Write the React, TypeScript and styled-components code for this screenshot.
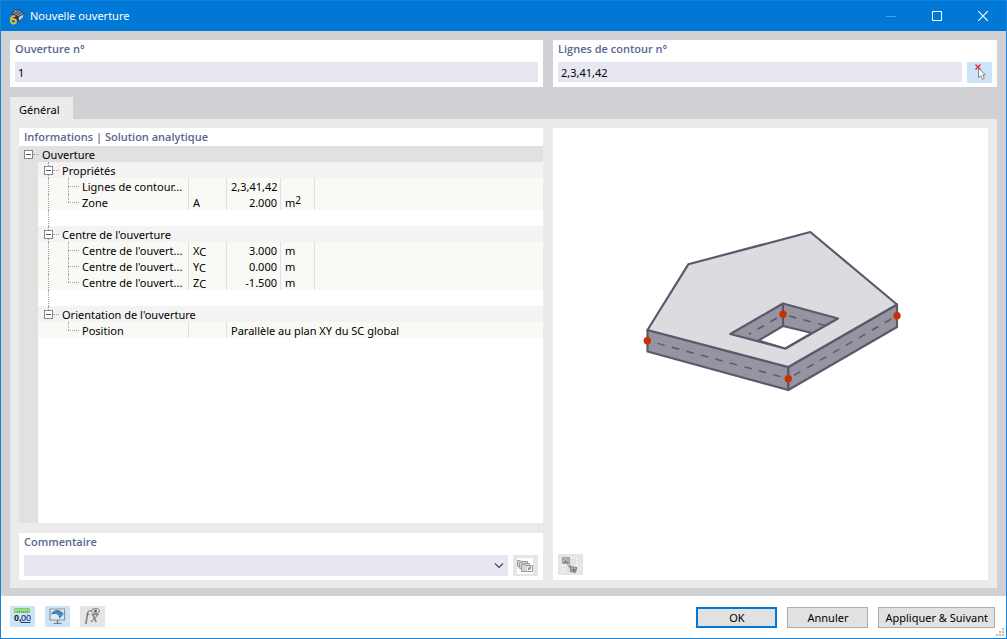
import React from "react";
import styled, { createGlobalStyle } from "styled-components";

const color = {
  accent: "#0078d7",
  frame: "#d0d0d5",
  panel: "#ebebeb",
  field: "#e7e7f2",
  heading: "#586690",
  active: "#cce4f7",
  idle: "#e5e5e5",
};

const GlobalStyle = createGlobalStyle`
  *, *::before, *::after { box-sizing: border-box; }
  body { margin: 0; }
  body, button, input, select {
    font-family: "Noto Sans", "Open Sans", sans-serif;
    font-size: 11px;
    line-height: 16px;
    color: #000;
  }
`;

const Window = styled.div`
  display: flex;
  flex-direction: column;
  min-height: 100vh;
  border: 1px solid #1883d9;
  background: #fff;
`;

const TitleBar = styled.header`
  display: flex;
  align-items: center;
  height: 30px;
  padding-left: 8px;
  background: ${color.accent};
  color: #fff;
`;

const Title = styled.h1`
  flex: 1;
  margin: 0 0 0 5px;
  font-size: 11px;
  font-weight: 400;
  line-height: 16px;
`;

const WindowButton = styled.button`
  display: grid;
  place-items: center;
  width: 46px;
  height: 30px;
  padding: 0;
  border: 0;
  background: transparent;
`;

const Body = styled.main`
  display: flex;
  flex: 1;
  flex-direction: column;
  padding: 9px 9px 8px;
  background: ${color.frame};
`;

const TopRow = styled.div`
  display: grid;
  grid-template-columns: minmax(0, 533fr) minmax(0, 444fr);
  gap: 10px;
`;

const Card = styled.section`
  display: flex;
  flex-direction: column;
  background: #fff;
  padding: 0 5px 4px;
`;

const cardHeading = `
  margin: 0;
  font-family: "Open Sans", "Noto Sans", sans-serif;
  font-size: 11px;
  font-weight: 600;
  color: ${color.heading};
`;

const FieldLabel = styled.label`
  ${cardHeading}
  padding: 1px 0 5px;
`;

const FieldRow = styled.div`
  display: flex;
  gap: 5px;
`;

const TextField = styled.input`
  flex: 1;
  min-width: 0;
  height: 20px;
  margin-bottom: 1px;
  padding: 1px 3px 0;
  border: 0;
  background: ${color.field};
`;

const IconButton = styled.button<{ $active?: boolean }>`
  display: grid;
  align-items: center;
  justify-content: start;
  flex: none;
  width: 25px;
  height: 21px;
  padding: 0 0 0 4px;
  border: 0;
  background: ${(p) => (p.$active ? color.active : color.idle)};
`;

const TabBar = styled.div`
  display: flex;
  margin-top: 10px;
`;

const Tab = styled.button`
  height: 22px;
  width: 63px;
  padding: 3px 0 0 9px;
  border: 0;
  text-align: left;
  background: ${color.panel};
`;

const TabPanel = styled.div`
  display: grid;
  flex: 1;
  grid-template-columns: minmax(0, 524fr) minmax(0, 435fr);
  gap: 10px;
  padding: 9px 9px 8px;
  background: ${color.panel};
`;

const LeftColumn = styled.div`
  display: flex;
  flex-direction: column;
  gap: 10px;
`;

const InfoCard = styled.section`
  display: flex;
  flex: 1;
  flex-direction: column;
  background: #fff;
`;

const InfoHeading = styled.h2`
  ${cardHeading}
  padding: 1px 5px;
`;

const TreeArea = styled.div`
  flex: 1;
  background: linear-gradient(to right, #e1e1e1 19px, #fff 19px);
`;

const Tree = styled.table`
  width: 100%;
  table-layout: fixed;
  border-collapse: separate;
  border-spacing: 0;
  line-height: 16px;
`;

const Column = styled.col<{ $width?: number }>`
  width: ${(p) => (p.$width ? `${p.$width}px` : "auto")};
`;

const GutterCell = styled.td`
  padding: 0;
  background: #e1e1e1;
`;

const RootCell = styled.td`
  padding: 0;
  background: #e1e1e1;
`;

const GroupCell = styled.td`
  padding: 0 0 0 1px;
  background: #f3f3f3;
`;

const SpacerCell = styled.td`
  padding: 0 0 0 1px;
  background: #fff;
`;

const LeafCell = styled.td<{ $right?: boolean; $divider?: boolean }>`
  height: 16px;
  padding: 0 ${(p) => (p.$right ? 3 : 2)}px 0 4px;
  white-space: nowrap;
  text-align: ${(p) => (p.$right ? "right" : "left")};
  background: #f9faf5;
  border-right: ${(p) => (p.$divider ? "1px solid #e0e0e0" : "0")};
`;

const LeafNameCell = styled(LeafCell)`
  padding: 0 0 0 1px;
`;

const Node = styled.div`
  display: flex;
  height: 16px;
`;

const NodeLabel = styled.span`
  flex: 1;
  height: 16px;
  padding: 1px 0 0 3px;
  white-space: nowrap;
`;

const CellText = styled.div`
  height: 16px;
  padding-top: 1px;
  line-height: 16px;
`;

type Span = "none" | "upper" | "full";

/* One 20px step of the tree: a dotted trunk and an optional dotted twig. */
const Step = styled.span<{ $trunk: Span; $twig?: boolean }>`
  display: grid;
  flex: none;
  grid-template-columns: 9px 11px;
  grid-template-rows: 8px 8px;
  width: 20px;
  height: 16px;
  &::before {
    content: "";
    grid-area: 1 / 2 / ${(p) => (p.$trunk === "full" ? 3 : 2)} / 3;
    border-left: ${(p) => (p.$trunk === "none" ? "0" : "1px dotted #a0a0a0")};
  }
  &::after {
    content: "";
    grid-area: 2 / 2 / 3 / 3;
    border-top: ${(p) => (p.$twig ? "1px dotted #a0a0a0" : "0")};
  }
`;

const Handle = styled.span<{ $above: boolean; $below: boolean }>`
  display: grid;
  flex: none;
  grid-template-columns: 5px 4px 5px 6px;
  grid-template-rows: 4px 9px 3px;
  width: 20px;
  height: 16px;
  &::before {
    content: "";
    grid-area: 1 / 3;
    border-left: ${(p) => (p.$above ? "1px dotted #a0a0a0" : "0")};
  }
  &::after {
    content: "";
    grid-area: 3 / 3;
    border-left: ${(p) => (p.$below ? "1px dotted #a0a0a0" : "0")};
  }
`;

const Toggle = styled.button`
  display: grid;
  grid-area: 2 / 2 / 3 / 4;
  place-items: center;
  width: 9px;
  height: 9px;
  padding: 0;
  border: 1px solid #868686;
  background: #fff;
  &::before {
    content: "";
    width: 5px;
    height: 1px;
    background: #555;
  }
`;

const HandleTwig = styled.span`
  grid-area: 2 / 4;
  align-self: center;
  height: 1px;
  border-top: 1px dotted #a0a0a0;
`;

const Sub = styled.span`
  position: relative;
  top: 1px;
`;

const Sup = styled.span`
  position: relative;
  top: -3px;
  font-size: 10px;
`;

const SelectWrap = styled.div`
  display: grid;
  flex: 1;
  align-items: center;
  background: ${color.field};
  > * { grid-area: 1 / 1; }
  > svg { justify-self: end; margin-right: 4px; pointer-events: none; }
`;

const Select = styled.select`
  appearance: none;
  width: 100%;
  height: 21px;
  border: 0;
  padding: 0 20px 0 3px;
  background: transparent;
`;

const Preview = styled.section`
  display: flex;
  flex-direction: column;
  padding-bottom: 5px;
  background: #fff;
`;

const PreviewArea = styled.div`
  flex: 1;
  > svg { display: block; width: 100%; height: 100%; }
`;

const PreviewTools = styled.div`
  display: flex;
  padding: 0 5px;
`;

const Footer = styled.footer`
  display: flex;
  align-items: flex-start;
  justify-content: space-between;
  padding: 10px 11px 10px 9px;
`;

const Tools = styled.div`
  display: flex;
  gap: 10px;
`;

const Actions = styled.div`
  display: flex;
  gap: 10px;
  padding-top: 1px;
`;

const ActionButton = styled.button<{ $primary?: boolean }>`
  min-width: 81px;
  height: 21px;
  padding: 0 6px;
  border: ${(p) => (p.$primary ? `2px solid ${color.accent}` : "1px solid #adadad")};
  background: #e1e1e1;
  line-height: 18px;
  white-space: nowrap;
`;

const Grip = styled.svg`
  position: absolute;
  right: 3px;
  bottom: 3px;
`;

const Shell = styled.div`
  position: relative;
`;

const AppIcon = () => (
  <svg width="16" height="17" viewBox="0 0 16 17" aria-hidden="true">
    <path d="M2.500 5 6 1.200 10.500 1.500 15.500 5.500 14.500 9.500 10 14 7 13z" fill="#2c3a50" />
    <path d="M6 2 10 2.300 14.500 5.800 9.500 8.200 3.800 5.200z" fill="#8797ab" />
    <path d="M9.800 9l4.800-2.400-.6 2.600L10 13z" fill="#c9d0d8" />
    <path d="M5 3.800l6 3.800M7 2.500l6 3.800M10.300 2.500L5.300 6M12.800 4.200L7.500 7.200" stroke="#33435c" strokeWidth=".6" fill="none" />
    <path d="M6.300 8.200H4L2 10v4l1.500 1.500H5.500L7 14v-1.500L5.500 11.200H2.500" fill="none" stroke="#e9bd2c" strokeWidth="1.800" />
  </svg>
);

const PickIcon = () => (
  <svg width="17" height="17" viewBox="0 0 17 17" aria-hidden="true">
    <path d="M4.500 .5l5 5M9.500 .5l-5 5" stroke="#e8283c" strokeWidth="1.400" />
    <path d="M7.500 4.500v9l2.200-1.800 1.900 3.600 1.800-1-1.800-3.400h3z" fill="#fff" stroke="#85898d" strokeWidth="1" />
  </svg>
);

const CardsIcon = () => (
  <svg width="16" height="16" viewBox="0 0 16 16" aria-hidden="true">
    <path fill="#fff" d="M0 0h16v16H0z" />
    <g fill="#d4d4d4" stroke="#9c9c9c">
      <path d="M.5 8.500v-6h3l1 1h6v5z" />
      <path d="M2.500 10.500v-6h3l1 1h6v5z" />
      <path d="M4.500 13.500v-7h3l1 1h7v6z" />
    </g>
    <path d="M10 9h5v4h-5z" fill="#f6f6f6" />
    <path d="M11 12.500V10l3-1.500v2z" fill="#8a8a8a" />
  </svg>
);

const ImageIcon = () => (
  <svg width="16" height="16" viewBox="0 0 16 16" aria-hidden="true">
    <path fill="#f0f0f0" d="M0 0h16v16H0z" />
    <path fill="#d6d6d6" d="M4 7h5v9H4zM8 2h5v6H8z" opacity=".7" />
    <path d="M0 10.500h8M0 13.500h8M2.500 8v8M5.500 8v8M10.500 0v8M13.500 0v8M8 3.500h8M8 6.500h8" stroke="#e2e2e2" />
    <path d="M.5.500h7v6h-7z" fill="#bdbdbd" stroke="#9c9c9c" />
    <path d="M1 6l2-2.500L5 5l1.500-1V6z" fill="#858585" />
    <path d="M1 1.500l6 4M7 1.500L3 4" stroke="#969696" strokeWidth=".8" />
    <path d="M5 7l4 1v3H7z" fill="#a6a6a6" />
    <path d="M8.500 9.500l6.500 1-1.500 5-5-1z" fill="#a9a9a9" stroke="#828282" />
    <path d="M10 14l1.500-2.500 2 1.500-.5 1.500z" fill="#6f6f6f" />
  </svg>
);

const UnitsIcon = () => (
  <svg width="17" height="17" viewBox="0 0 17 17" aria-hidden="true">
    <path d="M.5.500h15v4H.5z" fill="#9bdc86" stroke="#86cc70" />
    <path d="M3.500 3v1.500M5.500 3v1.500M7.500 3v1.500M9.500 3v1.500M11.500 3v1.500M13.500 3v1.500" stroke="#5ba348" />
    <text x="0" y="13" fontFamily="Liberation Sans, sans-serif" fontSize="9" fontWeight="700" fill="#101010">0,</text>
    <text x="7" y="13" fontFamily="Liberation Sans, sans-serif" fontSize="9" fill="#1c3a88" stroke="#1c3a88" strokeWidth=".2">00</text>
    <path d="M7 14.500h9.500" stroke="#1c3a88" />
  </svg>
);

const DisplayIcon = () => (
  <svg width="17" height="17" viewBox="0 0 17 17" aria-hidden="true">
    <path d="M1 1h14.500v11H1z" fill="#dcebf8" stroke="#8d949b" strokeWidth="1.200" />
    <path d="M8.500 12v3" stroke="#7d8287" strokeWidth="1.500" />
    <path d="M4.500 15.500h8" stroke="#7d8287" strokeWidth="1.200" />
    <path d="M2 6.500C3 3.500 6 1.800 8.500 2c3 .2 5.500 2 6 4.500l-4.500 4.500c.8-3-1-4.800-3-5C5 5.800 3 6 2 6.500z" fill="#437cae" />
    <path d="M5.500 3l2.500 2.800M12 3.200L9 6M14.300 6l-4.300 2" stroke="#86add0" strokeWidth=".6" fill="none" />
  </svg>
);

const FormulaIcon = () => (
  <svg width="17" height="17" viewBox="0 0 17 17" aria-hidden="true">
    <text x="1" y="13" fontFamily="Liberation Serif, serif" fontSize="15" fontStyle="italic" fill="#666">f</text>
    <text x="7" y="14" fontFamily="Liberation Serif, serif" fontSize="15" fontStyle="italic" fill="#666">x</text>
    <ellipse cx="11.500" cy="3" rx="4" ry="2.500" fill="#eee" stroke="#777" />
    <circle cx="11.500" cy="3" r="1.600" fill="#666" />
    <path d="M7.500 6.500h7.500" stroke="#888" />
  </svg>
);

const SlabDrawing = () => (
  <svg viewBox="0 0 435 426" role="img" aria-label="Dalle avec ouverture">
    <g stroke="#5b596c" strokeWidth="2.200" strokeLinejoin="round">
      <path d="M94.500 202L235.300 239V262L94.500 223.500z" fill="#9594a0" />
      <path d="M235.300 239L344 176.500V199L235.300 262z" fill="#9594a0" />
      <path d="M94.500 202L135.300 136.300 257.300 104 344 176.500 235.300 239z" fill="#dcdbe0" />
      <path d="M177.300 206L230 175.500 285 190.500 232.300 220.500z" fill="#9594a0" />
      <path d="M205.500 212.500L230 198 259 205 232.300 220.500z" fill="#fff" />
      <path d="M230 175.500V198" />
    </g>
    <g stroke="#5b596c" strokeWidth="1.500" strokeDasharray="7.500 7.500" fill="none">
      <path d="M104.500 215.400L235.300 250.700" />
      <path d="M241 247.400L344 187.700" />
      <path d="M224 190L196 206.200" />
      <path d="M236 188L274 198" />
    </g>
    <g fill="#c83200">
      <circle cx="94.300" cy="212.700" r="3.700" />
      <circle cx="235.300" cy="250.700" r="3.700" />
      <circle cx="230" cy="186.300" r="3.700" />
      <circle cx="344" cy="187.700" r="3.700" />
    </g>
  </svg>
);

interface Leaf {
  name: string;
  symbol?: React.ReactNode;
  value: string;
  unit?: React.ReactNode;
  align?: "left" | "wide";
}

interface Group {
  title: string;
  leaves: Leaf[];
}

const axis = (letter: string) => (
  <>
    {letter}
    <Sub>C</Sub>
  </>
);

const groups: Group[] = [
  {
    title: "Propriétés",
    leaves: [
      { name: "Lignes de contour...", value: "2,3,41,42", align: "left" },
      { name: "Zone", symbol: "A", value: "2.000", unit: <>m<Sup>2</Sup></> },
    ],
  },
  {
    title: "Centre de l'ouverture",
    leaves: [
      { name: "Centre de l'ouvert...", symbol: axis("X"), value: "3.000", unit: "m" },
      { name: "Centre de l'ouvert...", symbol: axis("Y"), value: "0.000", unit: "m" },
      { name: "Centre de l'ouvert...", symbol: axis("Z"), value: "-1.500", unit: "m" },
    ],
  },
  {
    title: "Orientation de l'ouverture",
    leaves: [{ name: "Position", value: "Parallèle au plan XY du SC global", align: "wide" }],
  },
];

const TreeHandle = ({ label, above = false, below = false }: { label: string; above?: boolean; below?: boolean }) => (
  <Handle $above={above} $below={below}>
    <Toggle type="button" aria-label={`Réduire ${label}`} aria-expanded="true" />
    <HandleTwig />
  </Handle>
);

const LeafRow = ({ leaf, lastLeaf, lastGroup }: { leaf: Leaf; lastLeaf: boolean; lastGroup: boolean }) => (
  <tr>
    <GutterCell />
    <LeafNameCell $divider>
      <Node>
        <Step $trunk={lastGroup ? "none" : "full"} />
        <Step $trunk={lastLeaf ? "upper" : "full"} $twig />
        <NodeLabel>{leaf.name}</NodeLabel>
      </Node>
    </LeafNameCell>
    <LeafCell $divider><CellText>{leaf.symbol}</CellText></LeafCell>
    {leaf.align === "wide" ? (
      <LeafCell colSpan={3}><CellText>{leaf.value}</CellText></LeafCell>
    ) : (
      <>
        <LeafCell $divider $right={!leaf.align}><CellText>{leaf.value}</CellText></LeafCell>
        <LeafCell $divider><CellText>{leaf.unit}</CellText></LeafCell>
        <LeafCell />
      </>
    )}
  </tr>
);

const PropertyTree = () => (
  <Tree aria-label="Informations">
    <colgroup>
      <Column $width={19} />
      <Column $width={151} />
      <Column $width={38} />
      <Column $width={54} />
      <Column $width={34} />
      <Column />
    </colgroup>
    <tbody>
      <tr>
        <RootCell colSpan={6}>
          <Node>
            <TreeHandle label="Ouverture" />
            <NodeLabel>Ouverture</NodeLabel>
          </Node>
        </RootCell>
      </tr>
      {groups.map((group, g) => {
        const lastGroup = g === groups.length - 1;
        return (
          <React.Fragment key={group.title}>
            <tr>
              <GutterCell />
              <GroupCell colSpan={5}>
                <Node>
                  <TreeHandle label={group.title} above below={!lastGroup} />
                  <NodeLabel>{group.title}</NodeLabel>
                </Node>
              </GroupCell>
            </tr>
            {group.leaves.map((leaf, i) => (
              <LeafRow key={i} leaf={leaf} lastLeaf={i === group.leaves.length - 1} lastGroup={lastGroup} />
            ))}
            {!lastGroup && (
              <tr>
                <GutterCell />
                <SpacerCell colSpan={5}><Node><Step $trunk="full" /></Node></SpacerCell>
              </tr>
            )}
          </React.Fragment>
        );
      })}
    </tbody>
  </Tree>
);

export default function App() {
  return (
    <Shell>
      <GlobalStyle />
      <Window>
        <TitleBar>
          <AppIcon />
          <Title>Nouvelle ouverture</Title>
          <WindowButton type="button" aria-label="Réduire" disabled>
            <svg width="10" height="10"><path d="M0 5.500h10" stroke="#4da0e3" /></svg>
          </WindowButton>
          <WindowButton type="button" aria-label="Agrandir">
            <svg width="10" height="10"><path d="M.5.500h9v9h-9z" fill="none" stroke="#fff" /></svg>
          </WindowButton>
          <WindowButton type="button" aria-label="Fermer">
            <svg width="10" height="10"><path d="M0 0l10 10M10 0L0 10" stroke="#fff" strokeWidth="1.200" /></svg>
          </WindowButton>
        </TitleBar>

        <Body>
          <TopRow>
            <Card>
              <FieldLabel htmlFor="opening-no">Ouverture n°</FieldLabel>
              <FieldRow>
                <TextField id="opening-no" defaultValue="1" />
              </FieldRow>
            </Card>
            <Card>
              <FieldLabel htmlFor="boundary-lines">Lignes de contour n°</FieldLabel>
              <FieldRow>
                <TextField id="boundary-lines" defaultValue="2,3,41,42" />
                <IconButton type="button" $active aria-label="Sélectionner les lignes">
                  <PickIcon />
                </IconButton>
              </FieldRow>
            </Card>
          </TopRow>

          <TabBar role="tablist">
            <Tab type="button" role="tab" aria-selected="true">Général</Tab>
          </TabBar>

          <TabPanel role="tabpanel">
            <LeftColumn>
              <InfoCard>
                <InfoHeading>Informations | Solution analytique</InfoHeading>
                <TreeArea>
                  <PropertyTree />
                </TreeArea>
              </InfoCard>
              <Card>
                <FieldLabel htmlFor="comment">Commentaire</FieldLabel>
                <FieldRow>
                  <SelectWrap>
                    <Select id="comment" defaultValue="">
                      <option value="" />
                    </Select>
                    <svg width="10" height="6" viewBox="0 0 10 6" aria-hidden="true">
                      <path d="M1 .5l4 4 4-4" fill="none" stroke="#444" strokeWidth="1.100" />
                    </svg>
                  </SelectWrap>
                  <IconButton type="button" aria-label="Commentaires enregistrés">
                    <CardsIcon />
                  </IconButton>
                </FieldRow>
              </Card>
            </LeftColumn>
            <Preview>
              <PreviewArea>
                <SlabDrawing />
              </PreviewArea>
              <PreviewTools>
                <IconButton type="button" aria-label="Changer l'image">
                  <ImageIcon />
                </IconButton>
              </PreviewTools>
            </Preview>
          </TabPanel>
        </Body>

        <Footer>
          <Tools>
            <IconButton type="button" $active aria-label="Unités et décimales"><UnitsIcon /></IconButton>
            <IconButton type="button" $active aria-label="Affichage"><DisplayIcon /></IconButton>
            <IconButton type="button" aria-label="Formules"><FormulaIcon /></IconButton>
          </Tools>
          <Actions>
            <ActionButton type="button" $primary>OK</ActionButton>
            <ActionButton type="button">Annuler</ActionButton>
            <ActionButton type="button">Appliquer &amp; Suivant</ActionButton>
          </Actions>
        </Footer>
      </Window>
      <Grip width="8" height="8" aria-hidden="true">
        <path d="M6 0h2v2H6zM3 3h2v2H3zM6 3h2v2H6zM0 6h2v2H0zM3 6h2v2H3zM6 6h2v2H6z" fill="#bfbfbf" />
      </Grip>
    </Shell>
  );
}
